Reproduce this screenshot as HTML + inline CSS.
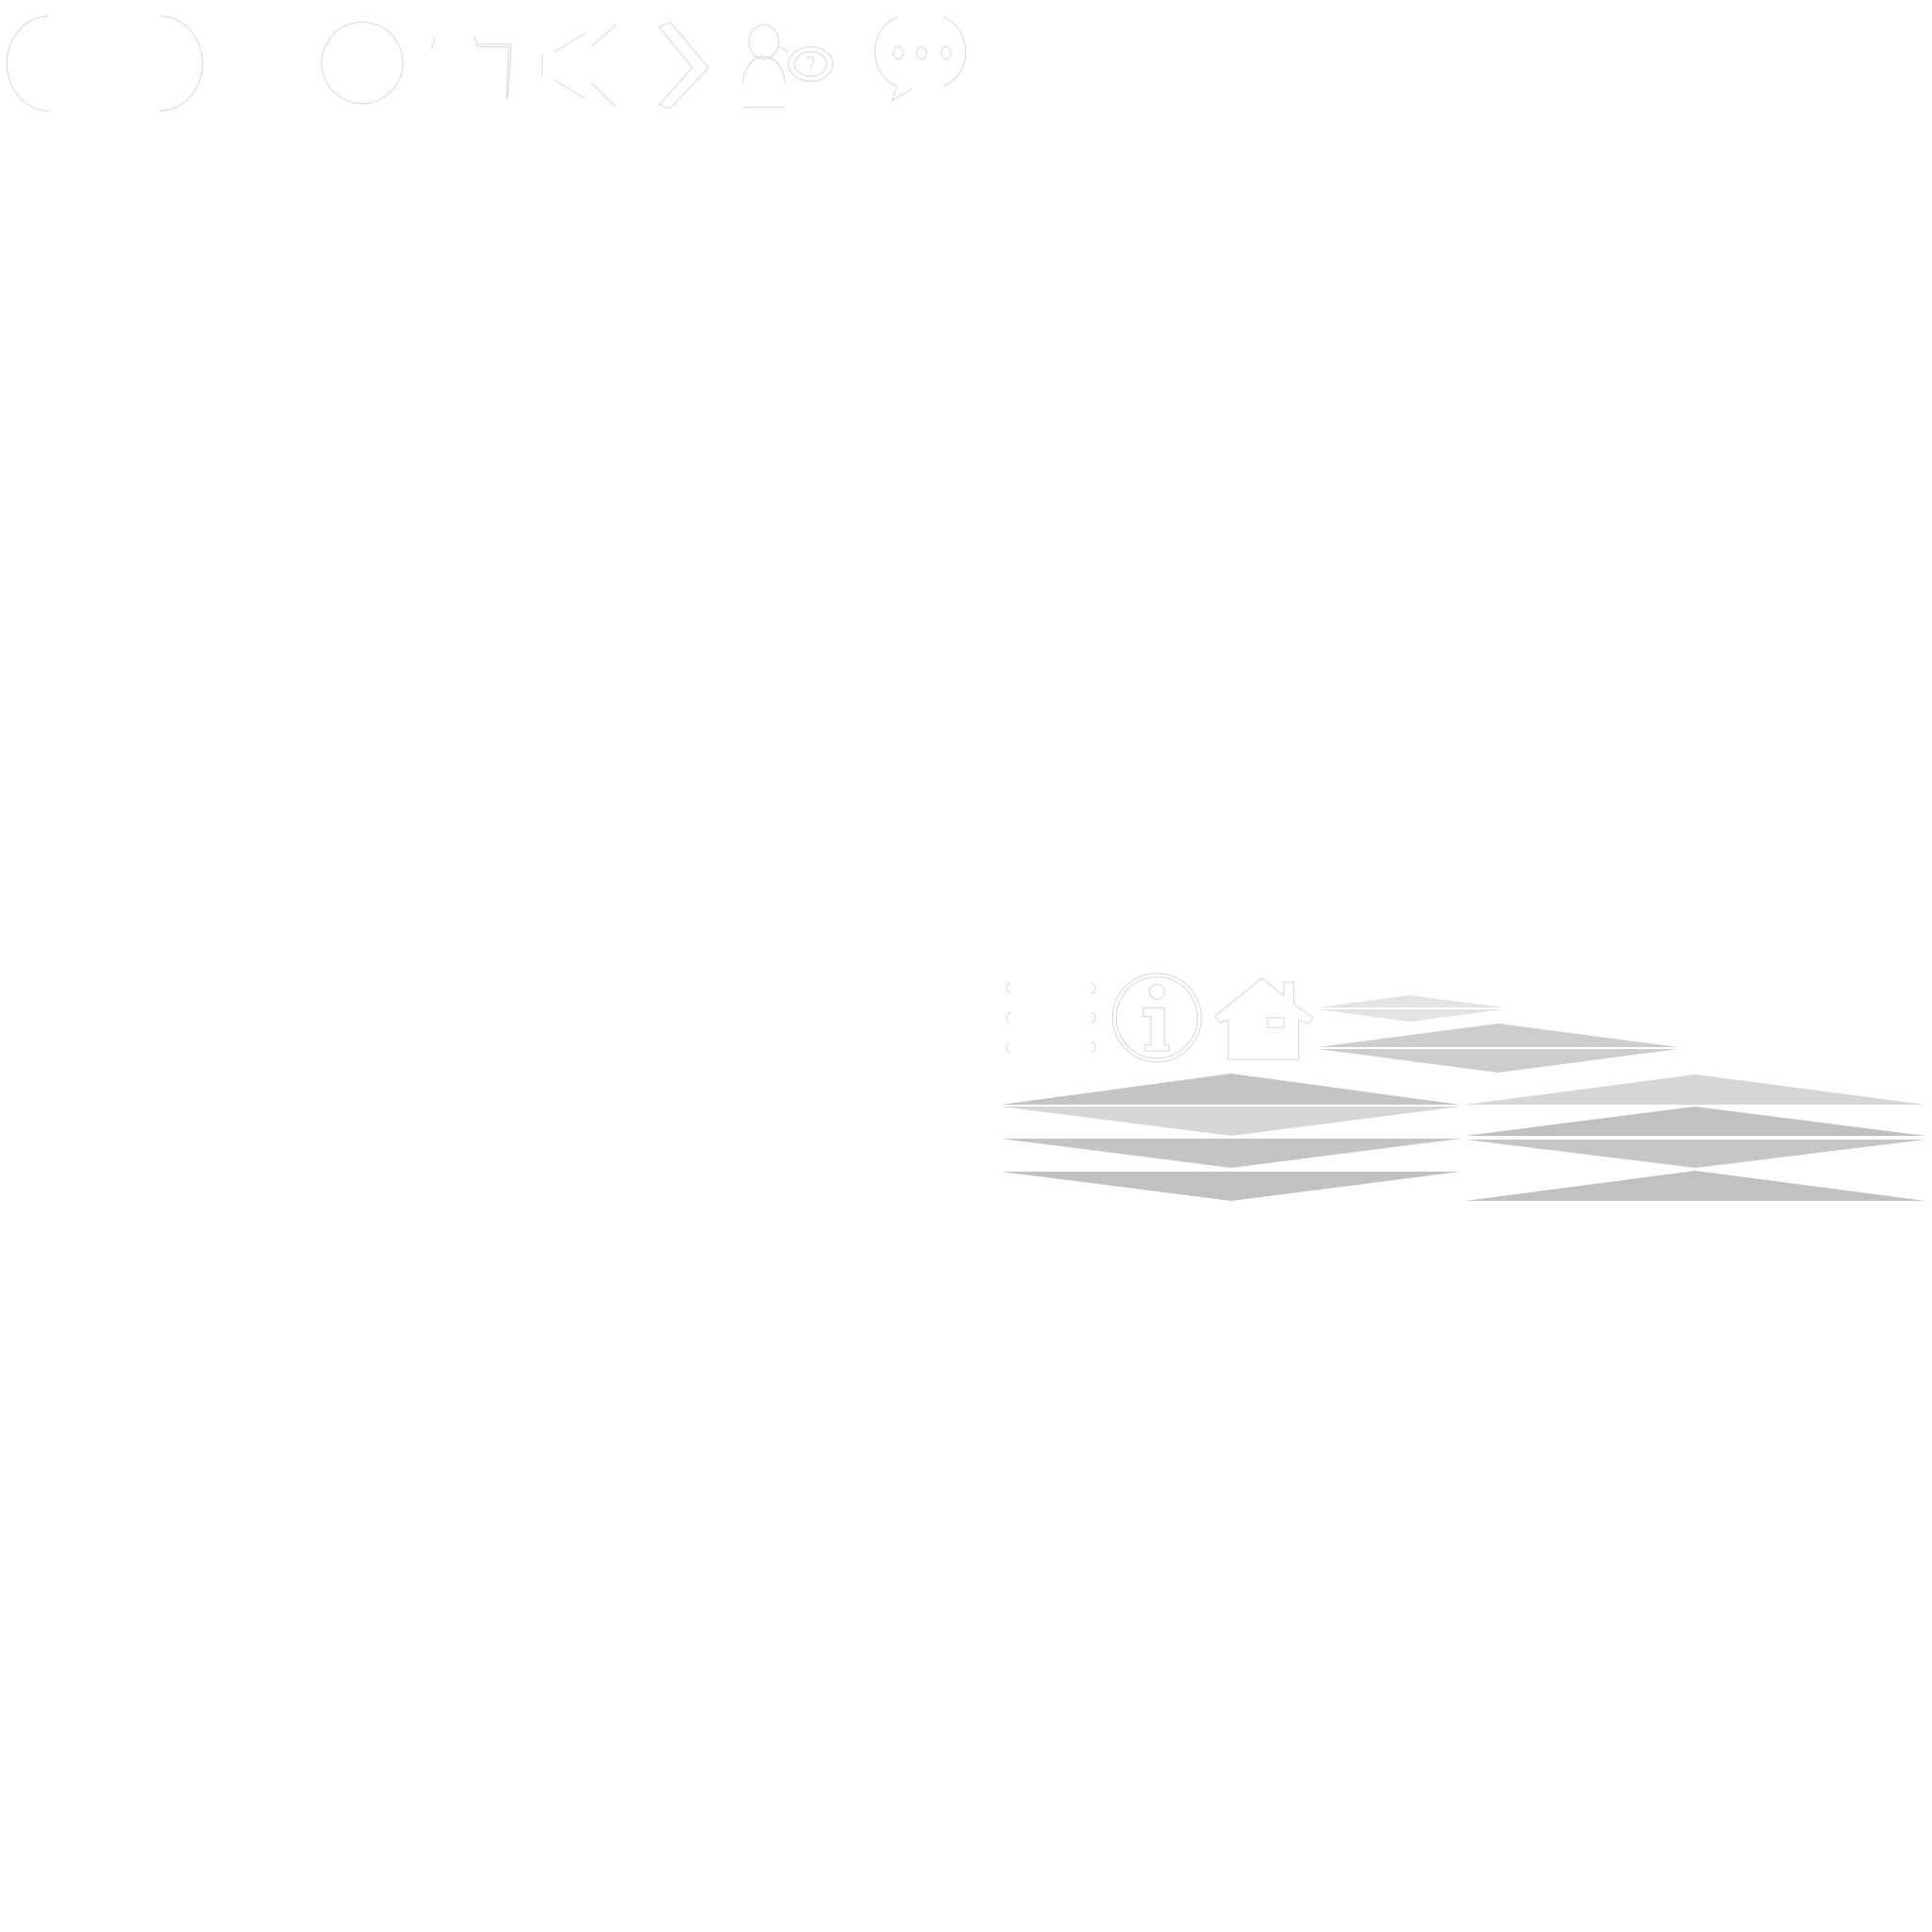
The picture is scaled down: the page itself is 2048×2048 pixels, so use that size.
<!DOCTYPE html>
<html><head><meta charset="utf-8"><style>html,body{margin:0;padding:0;background:#fff;width:2048px;height:2048px;overflow:hidden}</style></head>
<body>
<svg width="2048" height="2048" viewBox="0 0 2048 2048" xmlns="http://www.w3.org/2000/svg">
<g transform="scale(1.306)" fill="none" stroke="#d8d8d8" stroke-width="0.8">
  <path d="M40 13 A34 38 0 0 0 40 90"/>
  <path d="M130 13 A34 38 0 0 1 130 90"/>
  <circle cx="294" cy="51" r="33"/>
  <path d="M353 30 L350 40"/>
  <path d="M385 30 L388 38 L413 38 L411 80 M388 36 L415 36 L412 80"/>
  <path d="M475 27 L450 42 M500 20 L480 38 M450 65 L475 80 M480 67 L500 87 M440 45 L440 62"/>
  <path d="M544 18 L575 55 L544 88 L535 85 L562 55 L535 22 Z"/>
  <ellipse cx="620" cy="34" rx="12" ry="14"/>
  <path d="M603 68 A17 22 0 0 1 637 68 M603 87 L637 87"/>
  <path d="M632 38 L640 42"/>
  <ellipse cx="658" cy="52" rx="18" ry="14"/><ellipse cx="658" cy="52" rx="13" ry="10"/>
  <path d="M655 48 A3 3 0 1 1 659 52 L658 56 M658 60 L658 61"/>
  <path d="M728 70 A28 30 0 0 1 728 14 M766 14 A28 30 0 0 1 766 70 M740 72 L724 82 L728 70"/>
  <ellipse cx="729" cy="43" rx="4" ry="5"/><ellipse cx="748" cy="43" rx="4" ry="5"/><ellipse cx="768" cy="43" rx="4" ry="5"/>
  <path d="M820 798 A3 4 0 0 0 820 806 M820 822 A3 4 0 0 0 820 830 M820 846 A3 4 0 0 0 820 854"/>
  <path d="M886 798 A3 4 0 0 1 886 806 M886 822 A3 4 0 0 1 886 830 M886 846 A3 4 0 0 1 886 854"/>
  <ellipse cx="939" cy="826" rx="36" ry="36"/><ellipse cx="939" cy="826" rx="33" ry="33"/>
  <ellipse cx="939" cy="805" rx="6" ry="6"/>
  <path d="M928 818 L945 818 L945 848 L949 848 L949 853 L929 853 L929 848 L934 848 L934 825 L928 825 Z"/>
  <path d="M997 860 L997 828 L990 830 L986 825 L1024 794 L1042 808 L1042 797 L1050 797 L1050 815 L1066 826 L1062 831 L1054 828 L1054 860 Z"/>
  <rect x="1029" y="826" width="13" height="8"/>
</g>
<g stroke="none">
  <polygon points="1397,1068 1495,1055 1593,1068" fill="#e3e3e3"/>
  <polygon points="1397,1070 1495,1083 1593,1070" fill="#e3e3e3"/>
  <polygon points="1397,1110 1588,1085 1779,1110" fill="#cdcdcd"/>
  <polygon points="1397,1112 1588,1137 1779,1112" fill="#cdcdcd"/>
  <polygon points="1061,1171 1305,1138 1548,1171" fill="#c4c4c4"/>
  <polygon points="1061,1173 1305,1204 1548,1173" fill="#d6d6d6"/>
  <polygon points="1061,1207 1305,1238 1548,1207" fill="#c4c4c4"/>
  <polygon points="1061,1242 1305,1273 1548,1242" fill="#c1c1c1"/>
  <polygon points="1553,1171 1797,1139 2041,1171" fill="#d6d6d6"/>
  <polygon points="1553,1204 1797,1173 2041,1204" fill="#c1c1c1"/>
  <polygon points="1553,1208 1797,1238 2041,1208" fill="#c6c6c6"/>
  <polygon points="1553,1273 1797,1241 2041,1273" fill="#c1c1c1"/>
</g>
</svg>
</body></html>
